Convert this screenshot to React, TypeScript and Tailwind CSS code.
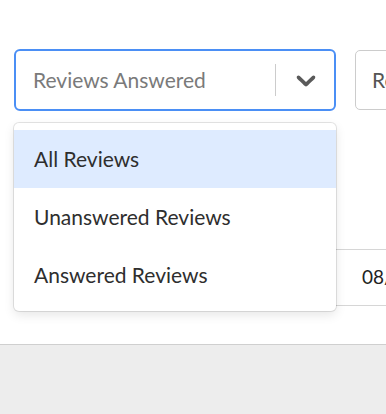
import React from "react";

const options = ["All Reviews", "Unanswered Reviews", "Answered Reviews"];

function Chevron() {
  return (
    <svg viewBox="0 0 20 20" className="h-[32px] w-[32px] fill-[#5a5a5a]" aria-hidden>
      <path d="M4.516 7.548c0.436-0.446 1.043-0.481 1.576 0l3.908 3.747 3.908-3.747c0.533-0.481 1.141-0.446 1.574 0 0.436 0.445 0.408 1.197 0 1.615-0.406 0.418-4.695 4.502-4.695 4.502-0.217 0.223-0.502 0.335-0.787 0.335s-0.57-0.112-0.789-0.335c0 0-4.287-4.084-4.695-4.502s-0.436-1.17 0-1.615z" />
    </svg>
  );
}

export default function App() {
  return (
    <div className="relative flex h-[414px] w-[386px] flex-col overflow-hidden bg-white font-['Lato',sans-serif]">
      <div className="flex items-center gap-[19px] pl-[14px] pt-[49px]">
        <div className="relative shrink-0">
          <div className="flex h-[62px] w-[322px] items-center rounded-[6px] border-2 border-[#4b8ff5] bg-white">
            <span className="flex-1 pl-[17px] text-[21px] text-[#7a7a7a]">Reviews Answered</span>
            <span className="h-[32px] w-px bg-[#cccccc]" />
            <span className="flex w-[58px] justify-center pl-[2px]">
              <Chevron />
            </span>
          </div>

          <div className="absolute left-0 top-[74px] z-10 w-[322px] rounded-[5px] bg-white py-[7px] shadow-[0_0_0_1px_rgba(0,0,0,0.1),0_4px_11px_rgba(0,0,0,0.1)]">
            {options.map((o, i) => (
              <div
                key={o}
                className={`flex h-[58px] items-center pl-[20px] text-[21px] text-[#2e2e2e] ${i === 0 ? "bg-[#deebff]" : ""}`}
              >
                {o}
              </div>
            ))}
          </div>
        </div>

        <div className="flex h-[60px] w-[200px] shrink-0 items-center rounded-[5px] border border-[#cccccc] pl-[16px] text-[21px] text-[#555555]">
          Reviews
        </div>
      </div>

      <div className="ml-[20px] mt-[138px] flex h-[57px] items-center border-y border-[#d6d6d6] pl-[342px] text-[19px] text-[#222222]">
        08/24/2023
      </div>

      <div className="mt-[38px] flex-1 border-t border-[#cfcfcf] bg-[#ededed]" />
    </div>
  );
}
